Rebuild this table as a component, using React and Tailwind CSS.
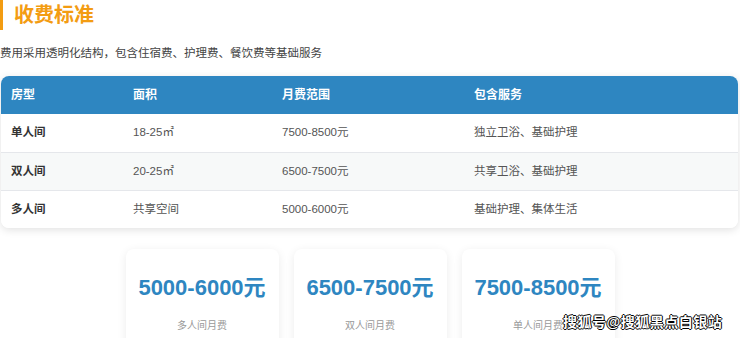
import React from "react";

const rows = [
  { type: "单人间", area: "18-25㎡", price: "7500-8500元", service: "独立卫浴、基础护理" },
  { type: "双人间", area: "20-25㎡", price: "6500-7500元", service: "共享卫浴、基础护理" },
  { type: "多人间", area: "共享空间", price: "5000-6000元", service: "基础护理、集体生活" },
];

const cards = [
  { price: "5000-6000元", label: "多人间月费" },
  { price: "6500-7500元", label: "双人间月费" },
  { price: "7500-8500元", label: "单人间月费" },
];

const cols = "grid grid-cols-[132px_149px_192px_1fr]";

const App = () => {
  return (
    <div className="relative w-[740px] h-[338px] overflow-hidden bg-white" style={{ fontFamily: '"Liberation Sans", "Noto Sans CJK SC", sans-serif' }}>
      <div className="border-l-[3px] border-[#f39c12] h-[30px] flex items-center pl-[11px]">
        <h2 className="text-[20px] font-bold text-[#f39c12] leading-none">收费标准</h2>
      </div>
      <p className="text-[11.5px] text-[#444] mt-[15px] leading-[16px]">费用采用透明化结构，包含住宿费、护理费、餐饮费等基础服务</p>

      <div className="mt-[15px] ml-px mr-[2px] rounded-lg overflow-hidden shadow-[0_2px_8px_rgba(0,0,0,0.12)] bg-white">
        <div className={`${cols} bg-[#2e86c1] text-white text-[12px] font-bold h-[38px] items-center`}>
          <div className="pl-[10px]">房型</div>
          <div>面积</div>
          <div>月费范围</div>
          <div>包含服务</div>
        </div>
        {rows.map((r, i) => (
          <div key={r.type} className={`${cols} h-[38px] items-center text-[11.5px] text-[#555] ${i > 0 ? "border-t border-[#e5e7eb]" : ""} ${i === 1 ? "bg-[#f7f9f9]" : "bg-white"}`}>
            <div className="pl-[10px] font-bold text-[#333]">{r.type}</div>
            <div>{r.area}</div>
            <div>{r.price}</div>
            <div>{r.service}</div>
          </div>
        ))}
      </div>

      <div className="flex justify-center gap-[15px] mt-[21px]">
        {cards.map((c) => (
          <div key={c.label} className="w-[153px] h-[120px] rounded-lg bg-white shadow-[0_2px_10px_rgba(0,0,0,0.08)] flex flex-col items-center pt-[25px]">
            <div className="text-[22px] font-bold text-[#2e86c1] leading-[28px]">{c.price}</div>
            <div className="text-[10px] text-[#999] mt-[16px]">{c.label}</div>
          </div>
        ))}
      </div>

      <div className="absolute left-[563px] top-[313px] text-[14px] leading-[18px] tracking-[0.5px] text-white font-bold" style={{ textShadow: "1px 0 0 #000, -1px 0 0 #000, 0 1px 0 #000, 0 -1px 0 #000" }}>
        搜狐号@搜狐黑点白银站
      </div>
    </div>
  );
};

export default App;
